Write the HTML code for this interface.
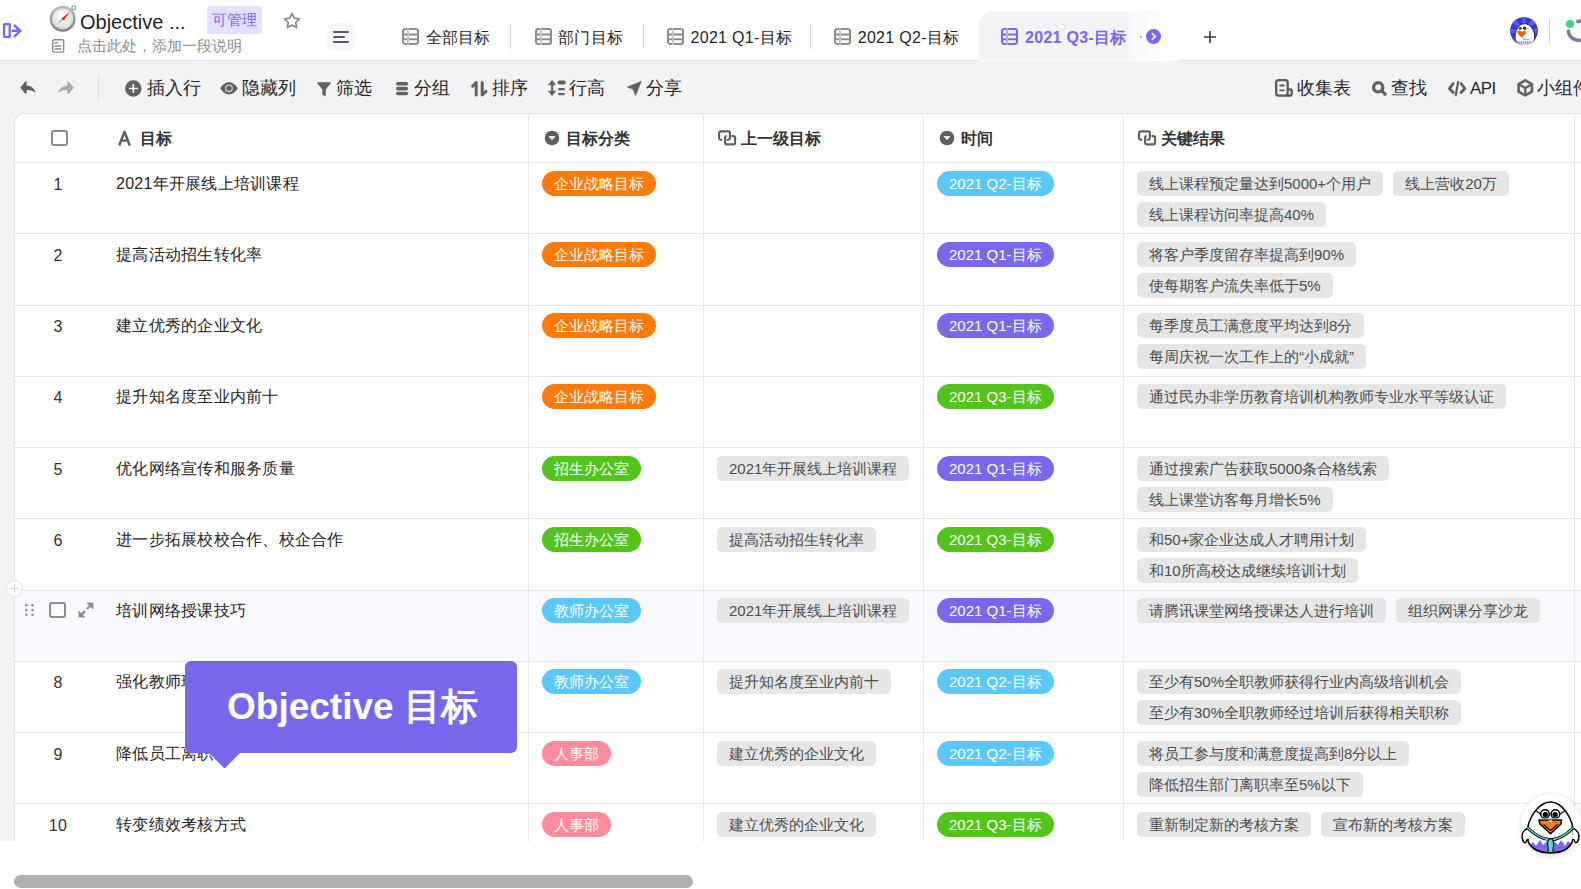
<!DOCTYPE html>
<html><head><meta charset="utf-8">
<style>
*{box-sizing:border-box;margin:0;padding:0}
html,body{width:1581px;height:889px;overflow:hidden;background:#fff;font-family:"Liberation Sans",sans-serif;color:#262626}
.a{position:absolute}
svg{position:absolute;overflow:visible}
#top{left:0;top:0;width:1581px;height:61px;background:#fff;border-bottom:1px solid #E6E4F4}
#gray{left:0;top:61px;width:1581px;height:780px;background:#F2F3F5}
#card{left:14px;top:113px;width:1600px;height:728px;background:#fff;border:1px solid #E3E3E3;border-right:none;border-bottom:none;border-top-left-radius:10px}
.vl{position:absolute;top:113px;width:1px;height:728px;background:#E8E8E8}
.hl{position:absolute;left:15px;width:1566px;height:1px;background:#E8E8E8}
.t{position:absolute;white-space:nowrap;font-size:16px;line-height:22px;letter-spacing:0.25px}
.pill{position:absolute;height:25px;border-radius:13px;color:#fff;font-size:15px;line-height:25px;padding:0 12px;white-space:nowrap}
.gt{position:absolute;height:25px;border-radius:5px;background:#E6E6E6;color:#4D4D4D;font-size:15px;line-height:25px;padding:0 12px;white-space:nowrap}
.krl{position:absolute;left:1137px;height:25px;white-space:nowrap}
.gt2{display:inline-block;vertical-align:top;height:25px;border-radius:5px;background:#E6E6E6;color:#4D4D4D;font-size:15px;line-height:25px;padding:0 12px;margin-right:10px}
.or{background:#FF7A07}.bl{background:#5AC8FA}.pu{background:#7A67EE}.gr{background:#52C41A}.pk{background:#FF8B9D}
.tb{position:absolute;font-size:18px;line-height:24px;white-space:nowrap;color:#262626}
.tab{position:absolute;font-size:16px;line-height:22px;white-space:nowrap;color:#262626;letter-spacing:0.3px}
.hd{position:absolute;font-size:16px;line-height:22px;font-weight:bold;white-space:nowrap;color:#333}

</style></head><body>
<div id="top" class="a"></div>
<div id="gray" class="a"></div>
<div id="card" class="a"></div>
<!-- sidebar toggle -->
<div class="a" style="left:-3px;top:17px;width:28px;height:28px;border-radius:50%;background:#fff;box-shadow:0 0 4px rgba(120,100,220,.18)"></div>
<svg style="left:3px;top:23px" width="20" height="16" viewBox="0 0 20 16"><rect x="1.1" y="1.1" width="5.6" height="12.8" rx="0.4" fill="none" stroke="#7A67EE" stroke-width="2.3"/><path d="M9.6 7.8H16.8M11.5 2.5L17.4 7.8 11.5 13.3" fill="none" stroke="#7A67EE" stroke-width="2.4" stroke-linecap="round" stroke-linejoin="round"/></svg>
<!-- compass emoji -->
<svg style="left:49px;top:5px" width="28" height="28" viewBox="0 0 28 28">
<defs><linearGradient id="cg" x1="0" y1="0" x2="0" y2="1"><stop offset="0" stop-color="#bdbdbd"/><stop offset="1" stop-color="#7d7d7d"/></linearGradient>
<radialGradient id="cf" cx="0.45" cy="0.4" r="0.6"><stop offset="0" stop-color="#fff"/><stop offset="1" stop-color="#dcdcdc"/></radialGradient></defs>
<circle cx="24.8" cy="2.8" r="2" fill="#fff" stroke="#9a9a9a" stroke-width="1.1"/>
<circle cx="13.7" cy="13.8" r="13" fill="url(#cg)"/><circle cx="13.7" cy="13.8" r="10.6" fill="url(#cf)"/>
<circle cx="13.7" cy="13.8" r="9.6" fill="none" stroke="#c8c8c8" stroke-width="1" stroke-dasharray="0.8 1.6"/>
<path d="M7.7 20.3 L13.2 13.3 L14.2 14.3Z" fill="#9a9a9a"/><path d="M20.5 7 L12.6 13.2 L14.8 15.4Z" fill="#E8231F"/>
</svg>
<div class="a" style="left:80px;top:9px;font-size:20px;line-height:26px;color:#1f1f1f;white-space:nowrap">Objective ...</div>
<div class="a" style="left:207px;top:6px;width:55px;height:28px;border-radius:3px;background:#E6E1FB;color:#7A67EE;font-size:15px;line-height:28px;text-align:center">可管理</div>
<svg style="left:283px;top:12px" width="18" height="17" viewBox="0 0 18 17"><path d="M9 1.3l2.3 4.8 5.2.7-3.8 3.6.9 5.2L9 13.1l-4.6 2.5.9-5.2L1.5 6.8l5.2-.7z" fill="none" stroke="#8C8C8C" stroke-width="1.7" stroke-linejoin="round"/></svg>
<svg style="left:52px;top:39px" width="13" height="14" viewBox="0 0 13 14"><rect x="0.7" y="0.7" width="11" height="12.4" rx="1.6" fill="none" stroke="#8C8C8C" stroke-width="1.4"/><path d="M2.6 3.9h3.3M2.6 7h6.8M2.6 10h6.8" stroke="#8C8C8C" stroke-width="1.5"/></svg>
<div class="a" style="left:77px;top:36px;font-size:15px;line-height:20px;color:#8C8C8C;white-space:nowrap">点击此处，添加一段说明</div>
<div class="a" style="left:327px;top:23px;width:28px;height:28px;border-radius:6px;background:#F7F6FD"></div>
<svg style="left:333px;top:30px" width="16" height="14" viewBox="0 0 16 14"><path d="M1 2h14M1 7h10M1 12h14" stroke="#595959" stroke-width="2" stroke-linecap="round"/></svg>
<!-- tabs -->
<div class="a" style="left:979px;top:11px;width:200px;height:49px;background:#F2F3F5;border-top-left-radius:14px;border-top-right-radius:14px"></div>
<div class="a" style="left:1128px;top:11px;width:51px;height:49px;border-top-right-radius:14px;background:linear-gradient(90deg,#F7F8F9,#FBFBFC 40%,#fff)"></div><div class="a" style="left:979px;top:60px;width:200px;height:1px;background:#fff"></div>
<svg style="left:402px;top:28px" width="17" height="17" viewBox="0 0 17 17"><rect x="1" y="1" width="15" height="15" rx="2.2" fill="none" stroke="#8E8E8E" stroke-width="2.1"/><path d="M1.5 6.4h14M1.5 11.2h14" stroke="#8E8E8E" stroke-width="2"/><path d="M6 0.2v16.6" stroke="#C4C4C4" stroke-width="1.9"/></svg>
<div class="tab" style="left:425.5px;top:27px">全部目标</div>
<svg style="left:535px;top:28px" width="17" height="17" viewBox="0 0 17 17"><rect x="1" y="1" width="15" height="15" rx="2.2" fill="none" stroke="#8E8E8E" stroke-width="2.1"/><path d="M1.5 6.4h14M1.5 11.2h14" stroke="#8E8E8E" stroke-width="2"/><path d="M6 0.2v16.6" stroke="#C4C4C4" stroke-width="1.9"/></svg>
<div class="tab" style="left:558px;top:27px">部门目标</div>
<svg style="left:667px;top:28px" width="17" height="17" viewBox="0 0 17 17"><rect x="1" y="1" width="15" height="15" rx="2.2" fill="none" stroke="#8E8E8E" stroke-width="2.1"/><path d="M1.5 6.4h14M1.5 11.2h14" stroke="#8E8E8E" stroke-width="2"/><path d="M6 0.2v16.6" stroke="#C4C4C4" stroke-width="1.9"/></svg>
<div class="tab" style="left:690.5px;top:27px">2021 Q1-目标</div>
<svg style="left:834px;top:28px" width="17" height="17" viewBox="0 0 17 17"><rect x="1" y="1" width="15" height="15" rx="2.2" fill="none" stroke="#8E8E8E" stroke-width="2.1"/><path d="M1.5 6.4h14M1.5 11.2h14" stroke="#8E8E8E" stroke-width="2"/><path d="M6 0.2v16.6" stroke="#C4C4C4" stroke-width="1.9"/></svg>
<div class="tab" style="left:857.7px;top:27px">2021 Q2-目标</div>
<div class="a" style="left:510px;top:24px;width:1px;height:25px;background:#D9D9E6"></div>
<div class="a" style="left:643px;top:24px;width:1px;height:25px;background:#D9D9E6"></div>
<div class="a" style="left:810px;top:24px;width:1px;height:25px;background:#D9D9E6"></div>
<svg style="left:1001px;top:28px" width="17" height="17" viewBox="0 0 17 17"><rect x="1" y="1" width="15" height="15" rx="2.2" fill="none" stroke="#7A67EE" stroke-width="2.1"/><path d="M1.5 6.4h14M1.5 11.2h14" stroke="#7A67EE" stroke-width="2"/><path d="M6 0.2v16.6" stroke="#B5AAF5" stroke-width="1.9"/></svg>
<div class="tab" style="left:1025px;top:27px;color:#7A67EE;font-weight:bold">2021 Q3-目标</div>
<div class="a" style="left:1140px;top:36px;width:2px;height:2px;border-radius:1px;background:#9b8cf2"></div>
<svg style="left:1146px;top:29px" width="15" height="15" viewBox="0 0 15 15"><circle cx="7.5" cy="7.5" r="7.5" fill="#7A67EE"/><path d="M6.3 4.5l3 3-3 3" fill="none" stroke="#fff" stroke-width="1.7" stroke-linecap="round" stroke-linejoin="round"/></svg>
<svg style="left:1203px;top:30px" width="14" height="14" viewBox="0 0 14 14"><path d="M7 1v12M1 7h12" stroke="#3a3a3a" stroke-width="1.6"/></svg>
<!-- avatar -->
<svg style="left:1510px;top:17px" width="28" height="28" viewBox="0 0 28 28">
<defs><clipPath id="avc"><circle cx="14" cy="14" r="14"/></clipPath></defs>
<g clip-path="url(#avc)"><circle cx="14" cy="14" r="14" fill="#3535DC"/>
<path d="M14 14 L11 -2 L17 -2Z M14 14 L24 -1 L29 4Z M14 14 L30 11 L30 17Z M14 14 L29 24 L24 29Z M14 14 L-2 11 L-2 17Z M14 14 L4 -1 L-1 4Z M14 14 L-1 24 L4 29Z" fill="#5B5BF2"/>
<path d="M14.5 6.7 C20 6.7 24.6 13 24.6 20 C24.6 26 20 28.5 14.5 28.5 C9 28.5 5.1 26 5.1 20 C5.1 13 9 6.7 14.5 6.7Z" fill="#fff" stroke="#222" stroke-width="0.9"/>
<path d="M7.2 14.2 C8.5 13 10.5 13.6 11.7 15 C13 13.6 15 13.2 16.3 14.5 C16.5 16.5 13.5 19 11.6 20.3 C9.5 19 7 16.5 7.2 14.2Z" fill="#E8650F"/>
<circle cx="10.2" cy="11.4" r="1.7" fill="#555"/><circle cx="14.6" cy="11.2" r="1.7" fill="#333"/>
<circle cx="18" cy="11.2" r="0.9" fill="#E0B040"/>
<path d="M12.8 19 L13.6 22.6 H19" fill="none" stroke="#777" stroke-width="0.7"/>
<path d="M6.5 25.5 H21.8" stroke="#B070F0" stroke-width="2.6" stroke-dasharray="1.5 0.6"/></g></svg>
<div class="a" style="left:1549px;top:18px;width:1px;height:25px;background:#D5D5E0"></div>
<div class="a" style="left:1566px;top:20px;width:8px;height:8px;border-radius:50%;background:#43D08E"></div>
<svg style="left:1566px;top:20px" width="30" height="22" viewBox="0 0 30 22"><path d="M2.5 11 A 11 9 0 0 0 22 17" fill="none" stroke="#7B7E92" stroke-width="3.6" stroke-linecap="round"/><path d="M12 1.5 A 9 9 0 0 1 20 3" fill="none" stroke="#7B7E92" stroke-width="3.6" stroke-linecap="round"/></svg>
<!-- toolbar -->
<svg style="left:20px;top:81px" width="17" height="14" viewBox="0 0 17 14"><path d="M6.6 0.5 Q5.8 0.1 5.2 0.7 L0.7 5.9 Q0.3 6.6 0.7 7.2 L5.2 12.5 Q5.8 13.1 6.6 12.6 L6.6 9.1 C10.3 8.8 13.5 10 15.9 12.1 C14.6 7.5 11.2 4.6 6.6 4.4Z" fill="#616161"/></svg>
<svg style="left:57px;top:81px" width="17" height="14" viewBox="0 0 17 14"><path d="M10.4 0.5 Q11.2 0.1 11.8 0.7 L16.3 5.9 Q16.7 6.6 16.3 7.2 L11.8 12.5 Q11.2 13.1 10.4 12.6 L10.4 9.1 C6.7 8.8 3.5 10 1.1 12.1 C2.4 7.5 5.8 4.6 10.4 4.4Z" fill="#A9A9A9"/></svg>
<div class="a" style="left:98px;top:75px;width:1px;height:24px;background:#DCDCDC"></div>
<svg style="left:125px;top:80px" width="17" height="17" viewBox="0 0 17 17"><circle cx="8.3" cy="8.5" r="8.2" fill="#616161"/><path d="M8.3 4v9M3.8 8.5h9" stroke="#fff" stroke-width="1.6"/></svg>
<div class="tb" style="left:147px;top:76px">插入行</div>
<svg style="left:220px;top:81.6px" width="18" height="13" viewBox="0 0 18 13"><path d="M0.2 6.35 C2.8 2 5.8 0.2 9 0.2 C12.2 0.2 15.2 2 17.8 6.35 C15.2 10.7 12.2 12.5 9 12.5 C5.8 12.5 2.8 10.7 0.2 6.35Z" fill="#616161"/><circle cx="9" cy="6.35" r="3.3" fill="none" stroke="#DDD" stroke-width="1.1"/></svg>
<div class="tb" style="left:242px;top:76px">隐藏列</div>
<svg style="left:317px;top:81.5px" width="14" height="15" viewBox="0 0 14 15"><path d="M0.8 0.2h12.4Q14.2 0.3 13.6 1.3L8.8 7.4V13.6Q8.6 14.6 7.6 14L5.6 12.7Q5.3 12.5 5.3 12V7.4L0.4 1.3Q-0.2 0.3 0.8 0.2Z" fill="#616161"/></svg>
<div class="tb" style="left:336px;top:76px">筛选</div>
<svg style="left:396px;top:82px" width="13" height="14" viewBox="0 0 13 14"><path d="M1.8 1.8h8.6M1.8 6.6h8.6M1.8 11.5h8.6" stroke="#616161" stroke-width="3.6" stroke-linecap="round"/></svg>
<div class="tb" style="left:414px;top:76px">分组</div>
<svg style="left:470.5px;top:80.5px" width="17" height="16" viewBox="0 0 17 16"><path d="M5.2 14V1.6L1.6 5.2" fill="none" stroke="#616161" stroke-width="3" stroke-linecap="round" stroke-linejoin="round"/><path d="M11.2 1.6V14L15 10.4" fill="none" stroke="#616161" stroke-width="3" stroke-linecap="round" stroke-linejoin="round"/></svg>
<div class="tb" style="left:492px;top:76px">排序</div>
<svg style="left:548px;top:80px" width="18" height="16" viewBox="0 0 18 16"><path d="M4.1 3.5v9" stroke="#616161" stroke-width="2"/><path d="M0.6 4.8L4.1 0.4 7.6 4.8Z M0.6 11.2L4.1 15.6 7.6 11.2Z" fill="#616161" stroke="#616161" stroke-width="0.8" stroke-linejoin="round"/><path d="M11.5 2.4h4.3" stroke="#616161" stroke-width="4" stroke-linecap="round"/><path d="M11.2 9.2h4.6M11.2 14.1h4.6" stroke="#616161" stroke-width="2.3" stroke-linecap="round"/></svg>
<div class="tb" style="left:569px;top:76px">行高</div>
<svg style="left:627px;top:81px" width="15" height="15" viewBox="0 0 15 15"><path d="M14.2 0.4 L0.2 6 L6 8.3 Z M14.2 0.4 L6 8.3 L8.6 14.6Z" fill="#616161" stroke="#616161" stroke-width="0.6" stroke-linejoin="round"/></svg>
<div class="tb" style="left:646px;top:76px">分享</div>
<svg style="left:1275px;top:79px" width="19" height="18" viewBox="0 0 19 18"><rect x="1.15" y="1.15" width="11.5" height="15.5" rx="2.6" fill="none" stroke="#595959" stroke-width="2.3"/><path d="M12.6 10.3H15.1Q16.7 10.3 16.7 12.2V14.4Q16.7 16.65 14.4 16.65H11" fill="none" stroke="#595959" stroke-width="2.3"/><path d="M5.2 6.5h3.6M5.2 11.4h3.6" stroke="#595959" stroke-width="1.9" stroke-linecap="round"/></svg>
<div class="tb" style="left:1297px;top:76px">收集表</div>
<svg style="left:1372px;top:81px" width="16" height="16" viewBox="0 0 16 16"><circle cx="6.2" cy="6.3" r="4.6" fill="none" stroke="#616161" stroke-width="3.3"/><path d="M9.8 9.9L13.1 13.2" stroke="#616161" stroke-width="3.2" stroke-linecap="round"/></svg>
<div class="tb" style="left:1391px;top:76px">查找</div>
<svg style="left:1447px;top:80px" width="20" height="17" viewBox="0 0 20 17"><path d="M6.2 3.6L2.4 8.5 6.2 12.4M14.1 3.6L17.9 8.5 14.1 12.4" fill="none" stroke="#616161" stroke-width="2.8" stroke-linecap="round" stroke-linejoin="round"/><path d="M11.2 1.8L8.8 15.2" stroke="#616161" stroke-width="2.2" stroke-linecap="round"/></svg>
<div class="tb" style="left:1470px;top:77px;font-size:17px;letter-spacing:-0.6px">API</div>
<svg style="left:1517px;top:79px" width="17" height="18" viewBox="0 0 17 18"><path d="M8.3 1.4L14.9 5.2V12.6L8.3 16.4L1.6 12.6V5.2Z" fill="none" stroke="#616161" stroke-width="2.6" stroke-linejoin="round"/><path d="M2 5.4L8.3 9 14.6 5.4M8.3 9V16" fill="none" stroke="#616161" stroke-width="2.3" stroke-linejoin="round"/></svg>
<div class="tb" style="left:1537px;top:76px">小组件</div>
<!-- table header -->
<div class="a" style="left:51px;top:130px;width:17px;height:16px;border:2px solid #8C8C8C;border-radius:3px"></div>
<svg style="left:118px;top:131px" width="13" height="15" viewBox="0 0 13 15"><path d="M1.2 14.5L6.5 0.8 11.8 14.5M3.3 9.6h6.4" fill="none" stroke="#5F5F5F" stroke-width="2.4" stroke-linejoin="round"/></svg>
<div class="hd" style="left:140px;top:128px">目标</div>
<svg style="left:544px;top:130px" width="16" height="16" viewBox="0 0 16 16"><circle cx="8" cy="8" r="7.3" fill="#5F5F5F"/><path d="M5.3 6.6h5.4L8 9.6Z" fill="#fff" stroke="#fff" stroke-width="0.9" stroke-linejoin="round"/></svg>
<svg style="left:939px;top:130px" width="16" height="16" viewBox="0 0 16 16"><circle cx="8" cy="8" r="7.3" fill="#5F5F5F"/><path d="M5.3 6.6h5.4L8 9.6Z" fill="#fff" stroke="#fff" stroke-width="0.9" stroke-linejoin="round"/></svg>
<div class="hd" style="left:566px;top:128px">目标分类</div>
<div class="hd" style="left:961px;top:128px">时间</div>
<svg style="left:717px;top:129px" width="20" height="18" viewBox="0 0 20 18"><path d="M4.4 10.7H3.7Q2.1 10.7 2.1 9.1V4Q2.1 2.4 3.7 2.4H11.3Q12.9 2.4 12.9 4V9.1Q12.9 10.7 11.3 10.7H10.6" fill="none" stroke="#5F5F5F" stroke-width="2.1" stroke-linecap="round"/><path d="M9.6 7.1H9.7Q8.1 7.1 8.1 8.7V13.8Q8.1 15.4 9.7 15.4H16.5Q18.1 15.4 18.1 13.8V8.7Q18.1 7.1 16.5 7.1H15.4" fill="none" stroke="#5F5F5F" stroke-width="2.1" stroke-linecap="round"/></svg>
<svg style="left:1137px;top:129px" width="20" height="18" viewBox="0 0 20 18"><path d="M4.4 10.7H3.7Q2.1 10.7 2.1 9.1V4Q2.1 2.4 3.7 2.4H11.3Q12.9 2.4 12.9 4V9.1Q12.9 10.7 11.3 10.7H10.6" fill="none" stroke="#5F5F5F" stroke-width="2.1" stroke-linecap="round"/><path d="M9.6 7.1H9.7Q8.1 7.1 8.1 8.7V13.8Q8.1 15.4 9.7 15.4H16.5Q18.1 15.4 18.1 13.8V8.7Q18.1 7.1 16.5 7.1H15.4" fill="none" stroke="#5F5F5F" stroke-width="2.1" stroke-linecap="round"/></svg>
<div class="hd" style="left:741px;top:128px">上一级目标</div>
<div class="hd" style="left:1161px;top:128px">关键结果</div>

<div class="a" style="left:15px;top:590px;width:1566px;height:71px;background:#F9F9FE"></div>
<div class="hl" style="top:162px"></div>
<div class="hl" style="top:233.00px"></div>
<div class="hl" style="top:305.00px"></div>
<div class="hl" style="top:376.00px"></div>
<div class="hl" style="top:447.00px"></div>
<div class="hl" style="top:518.00px"></div>
<div class="hl" style="top:590.00px"></div>
<div class="hl" style="top:661.00px"></div>
<div class="hl" style="top:732.00px"></div>
<div class="hl" style="top:803.00px"></div>
<div class="vl" style="left:528px"></div>
<div class="vl" style="left:703px"></div>
<div class="vl" style="left:923px"></div>
<div class="vl" style="left:1123px"></div>
<div class="vl" style="left:1574px"></div>
<div class="t num" style="left:28px;width:60px;text-align:center;top:174.00px;color:#333">1</div>
<div class="t" style="left:116px;top:173.00px;color:#262626">2021年开展线上培训课程</div>
<div class="pill or" style="left:542px;top:171.00px">企业战略目标</div>
<div class="pill bl" style="left:937px;top:171.00px">2021 Q2-目标</div>
<div class="krl" style="top:171.00px"><span class="gt2">线上课程预定量达到5000+个用户</span><span class="gt2">线上营收20万</span></div>
<div class="krl" style="top:202.00px"><span class="gt2">线上课程访问率提高40%</span></div>
<div class="t num" style="left:28px;width:60px;text-align:center;top:245.00px;color:#333">2</div>
<div class="t" style="left:116px;top:244.00px;color:#262626">提高活动招生转化率</div>
<div class="pill or" style="left:542px;top:242.00px">企业战略目标</div>
<div class="pill pu" style="left:937px;top:242.00px">2021 Q1-目标</div>
<div class="krl" style="top:242.00px"><span class="gt2">将客户季度留存率提高到90%</span></div>
<div class="krl" style="top:273.00px"><span class="gt2">使每期客户流失率低于5%</span></div>
<div class="t num" style="left:28px;width:60px;text-align:center;top:316.00px;color:#333">3</div>
<div class="t" style="left:116px;top:315.00px;color:#262626">建立优秀的企业文化</div>
<div class="pill or" style="left:542px;top:313.00px">企业战略目标</div>
<div class="pill pu" style="left:937px;top:313.00px">2021 Q1-目标</div>
<div class="krl" style="top:313.00px"><span class="gt2">每季度员工满意度平均达到8分</span></div>
<div class="krl" style="top:344.00px"><span class="gt2">每周庆祝一次工作上的“小成就”</span></div>
<div class="t num" style="left:28px;width:60px;text-align:center;top:387.00px;color:#333">4</div>
<div class="t" style="left:116px;top:386.00px;color:#262626">提升知名度至业内前十</div>
<div class="pill or" style="left:542px;top:384.00px">企业战略目标</div>
<div class="pill gr" style="left:937px;top:384.00px">2021 Q3-目标</div>
<div class="krl" style="top:384.00px"><span class="gt2">通过民办非学历教育培训机构教师专业水平等级认证</span></div>
<div class="t num" style="left:28px;width:60px;text-align:center;top:459.00px;color:#333">5</div>
<div class="t" style="left:116px;top:458.00px;color:#262626">优化网络宣传和服务质量</div>
<div class="pill gr" style="left:542px;top:456.00px">招生办公室</div>
<div class="gt" style="left:717px;top:456.00px">2021年开展线上培训课程</div>
<div class="pill pu" style="left:937px;top:456.00px">2021 Q1-目标</div>
<div class="krl" style="top:456.00px"><span class="gt2">通过搜索广告获取5000条合格线索</span></div>
<div class="krl" style="top:487.00px"><span class="gt2">线上课堂访客每月增长5%</span></div>
<div class="t num" style="left:28px;width:60px;text-align:center;top:530.00px;color:#333">6</div>
<div class="t" style="left:116px;top:529.00px;color:#262626">进一步拓展校校合作、校企合作</div>
<div class="pill gr" style="left:542px;top:527.00px">招生办公室</div>
<div class="gt" style="left:717px;top:527.00px">提高活动招生转化率</div>
<div class="pill gr" style="left:937px;top:527.00px">2021 Q3-目标</div>
<div class="krl" style="top:527.00px"><span class="gt2">和50+家企业达成人才聘用计划</span></div>
<div class="krl" style="top:558.00px"><span class="gt2">和10所高校达成继续培训计划</span></div>
<div class="t" style="left:116px;top:600.00px;color:#262626">培训网络授课技巧</div>
<div class="pill bl" style="left:542px;top:598.00px">教师办公室</div>
<div class="gt" style="left:717px;top:598.00px">2021年开展线上培训课程</div>
<div class="pill pu" style="left:937px;top:598.00px">2021 Q1-目标</div>
<div class="krl" style="top:598.00px"><span class="gt2">请腾讯课堂网络授课达人进行培训</span><span class="gt2">组织网课分享沙龙</span></div>
<div class="t num" style="left:28px;width:60px;text-align:center;top:672.00px;color:#333">8</div>
<div class="t" style="left:116px;top:671.00px;color:#262626">强化教师班级管理能力</div>
<div class="pill bl" style="left:542px;top:669.00px">教师办公室</div>
<div class="gt" style="left:717px;top:669.00px">提升知名度至业内前十</div>
<div class="pill bl" style="left:937px;top:669.00px">2021 Q2-目标</div>
<div class="krl" style="top:669.00px"><span class="gt2">至少有50%全职教师获得行业内高级培训机会</span></div>
<div class="krl" style="top:700.00px"><span class="gt2">至少有30%全职教师经过培训后获得相关职称</span></div>
<div class="t num" style="left:28px;width:60px;text-align:center;top:744.00px;color:#333">9</div>
<div class="t" style="left:116px;top:743.00px;color:#262626">降低员工离职率</div>
<div class="pill pk" style="left:542px;top:741.00px">人事部</div>
<div class="gt" style="left:717px;top:741.00px">建立优秀的企业文化</div>
<div class="pill bl" style="left:937px;top:741.00px">2021 Q2-目标</div>
<div class="krl" style="top:741.00px"><span class="gt2">将员工参与度和满意度提高到8分以上</span></div>
<div class="krl" style="top:772.00px"><span class="gt2">降低招生部门离职率至5%以下</span></div>
<div class="t num" style="left:28px;width:60px;text-align:center;top:815.00px;color:#333">10</div>
<div class="t" style="left:116px;top:814.00px;color:#262626">转变绩效考核方式</div>
<div class="pill pk" style="left:542px;top:812.00px">人事部</div>
<div class="gt" style="left:717px;top:812.00px">建立优秀的企业文化</div>
<div class="pill gr" style="left:937px;top:812.00px">2021 Q3-目标</div>
<div class="krl" style="top:812.00px"><span class="gt2">重新制定新的考核方案</span><span class="gt2">宣布新的考核方案</span></div>
<!-- row 7 hover controls -->
<svg style="left:25px;top:604px" width="9" height="12" viewBox="0 0 9 12"><g fill="#8C8C8C"><circle cx="1.3" cy="1.3" r="1.3"/><circle cx="7.5" cy="1.3" r="1.3"/><circle cx="1.3" cy="6" r="1.3"/><circle cx="7.5" cy="6" r="1.3"/><circle cx="1.3" cy="10.7" r="1.3"/><circle cx="7.5" cy="10.7" r="1.3"/></g></svg>
<div class="a" style="left:49px;top:602px;width:17px;height:16px;border:2px solid #8C8C8C;border-radius:3px"></div>
<svg style="left:78px;top:602px" width="16" height="16" viewBox="0 0 16 16"><path d="M15 1H9.2L15 6.8Z M1 15V9.2L6.8 15Z" fill="#8C8C8C" stroke="#8C8C8C" stroke-width="0.8" stroke-linejoin="round"/><path d="M12.4 3.6L9 7M3.6 12.4L7 9" stroke="#8C8C8C" stroke-width="2.3" stroke-linecap="butt"/></svg>
<svg style="left:6px;top:580px" width="17" height="17" viewBox="0 0 17 17"><circle cx="8.5" cy="8.5" r="8" fill="#fff" stroke="#E2E2E2" stroke-width="1"/><path d="M8.5 4.5v8M4.5 8.5h8" stroke="#D6D6D6" stroke-width="1.1"/></svg>
<!-- tooltip -->
<div class="a" style="left:185px;top:661px;width:332px;height:92px;border-radius:6px;background:#7866EC"></div>
<svg style="left:208px;top:752px" width="33" height="16" viewBox="0 0 33 16"><path d="M0 0H33L17.5 15.5Q16.5 16.5 15.5 15.5Z" fill="#7866EC"/></svg>
<div class="a" style="left:227px;top:685px;font-size:37px;line-height:44px;font-weight:bold;color:#fff;white-space:nowrap">Objective 目标</div>
<!-- mascot -->
<div class="a" style="left:1521px;top:794px;width:60px;height:61px;border-radius:50%;background:#fff;box-shadow:0 1px 5px rgba(0,0,0,.18)"></div>
<svg style="left:1521px;top:794px" width="60" height="61" viewBox="0 0 60 61">
<defs><clipPath id="mb"><path d="M29.5 8 C41 8 52.5 24 52.5 41 C52.5 53 43 59 29.5 59 C16 59 6 53 6 41 C6 24 18 8 29.5 8Z"/></clipPath></defs>
<path d="M29.5 8 C41 8 52.5 24 52.5 41 C52.5 53 43 59 29.5 59 C16 59 6 53 6 41 C6 24 18 8 29.5 8Z" fill="#fff"/>
<g clip-path="url(#mb)"><path d="M0 49 L8 52 L12 48 L15 52 L19 46 L22 51 L26 47 L29 52 L33 47 L37 51 L40 46 L44 52 L47 47 L51 51 L60 48 L60 61 L0 61Z" fill="#7A67EE"/></g>
<path d="M29.5 8 C41 8 52.5 24 52.5 41 C52.5 53 43 59 29.5 59 C16 59 6 53 6 41 C6 24 18 8 29.5 8Z" fill="none" stroke="#000" stroke-width="1.6"/>
<path d="M7 34 C3 36 0.5 40 1.2 44 C2 48 4 50 5 48 C5.5 46 6.5 45 8 46" fill="#fff" stroke="#000" stroke-width="1.5" stroke-linejoin="round"/>
<path d="M52 34 C56 36 58.5 40 57.8 44 C57 48 55 50 54 48 C53.5 46 52.5 45 51 46" fill="#fff" stroke="#000" stroke-width="1.5" stroke-linejoin="round"/>
<path d="M6.3 33.6 C14 41 22 45.7 29.6 45.7 C37 45.7 45 41 52.5 33.6" fill="none" stroke="#000" stroke-width="3"/>
<path d="M6.3 33.6 C14 41 22 45.7 29.6 45.7 C37 45.7 45 41 52.5 33.6" fill="none" stroke="#5ED8BE" stroke-width="1.4"/>
<path d="M27.8 45 L31.4 45 L32.6 49 L31.8 58.5 L27.4 58.5 L26.6 49Z" fill="#5ED8BE" stroke="#000" stroke-width="1"/>
<path d="M15.5 17 L20 20.5 M43.5 17 L38.5 20.5" stroke="#000" stroke-width="1.1"/>
<path d="M18 26 L40.5 26 L40 30 L29.5 39.7 L19 30Z" fill="#FF7A1A" stroke="#000" stroke-width="1.5" stroke-linejoin="round"/>
<path d="M22.5 30.5 L29.5 36.5 L36.5 30.5" fill="none" stroke="#000" stroke-width="1.2"/>
<circle cx="24" cy="20" r="4.3" fill="#fff" stroke="#000" stroke-width="1.5"/><circle cx="34.4" cy="20" r="4.3" fill="#fff" stroke="#000" stroke-width="1.5"/>
<circle cx="24.3" cy="20.6" r="2.7" fill="#000"/><circle cx="34.1" cy="20.6" r="2.7" fill="#000"/>
<path d="M20 24.8 H38.5" stroke="#7cc" stroke-width="0.9"/>
<path d="M27.5 26.3 L31.5 26.3 L29.5 28.5Z" fill="#fff"/>
</svg>
<div class="a" style="left:14px;top:875px;width:679px;height:13px;border-radius:7px;background:#B0B0B0"></div>

</body></html>
